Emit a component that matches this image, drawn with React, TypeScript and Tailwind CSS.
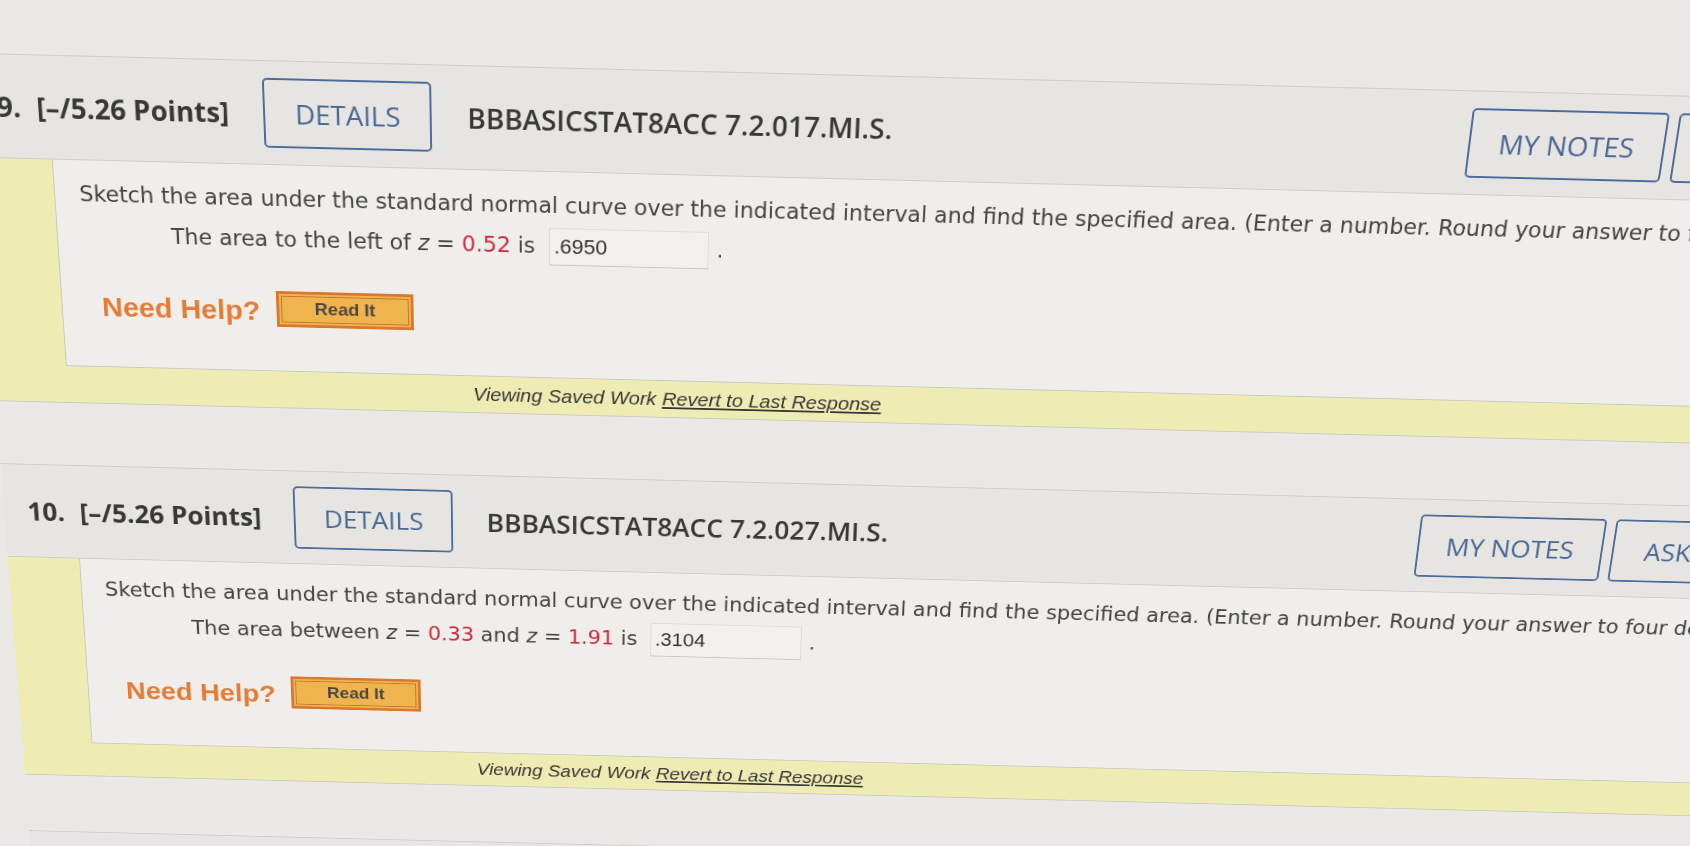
import React from 'react';

type Question = {
    num: string;
    code: string;
    prompt: React.ReactNode;
    answer: string;
};

const Red = ({ children }: { children: React.ReactNode }) => (
    <span className="text-[#cf2a3a]">{children}</span>
);

const questions: Question[] = [
    {
        num: '9.',
        code: 'BBBASICSTAT8ACC 7.2.017.MI.S.',
        prompt: (
            <>
                The area to the left of <i>z</i> = <Red>0.52</Red> is
            </>
        ),
        answer: '.6950',
    },
    {
        num: '10.',
        code: 'BBBASICSTAT8ACC 7.2.027.MI.S.',
        prompt: (
            <>
                The area between <i>z</i> = <Red>0.33</Red> and <i>z</i> = <Red>1.91</Red> is
            </>
        ),
        answer: '.3104',
    },
    {
        num: '11.',
        code: 'BBBASICSTAT8ACC 7.2.031.MI.S.',
        prompt: (
            <>
                The area to the right of <i>z</i> = <Red>1.24</Red> is
            </>
        ),
        answer: '',
    },
];

function QuestionBlock({ q }: { q: Question }) {
    return (
        <section className="mb-[70px]">
            {/* header */}
            <div className="flex h-[108px] items-center border-y border-[#cdccc7] bg-[#e6e5e1] pl-[25px] font-['Open_Sans',sans-serif] text-[#383838]">
                <div className="flex w-[1493px] shrink-0 items-center whitespace-nowrap">
                    <span className="text-[28px] font-bold">{q.num}</span>
                    <span className="ml-[16px] text-[28px] font-bold">[–/5.26 Points]</span>
                    <button className="ml-[35px] h-[72px] w-[171px] rounded-[5px] border-[2.5px] border-[#4d6c9b] text-[28px] text-[#4a6895]">
                        DETAILS
                    </button>
                    <span className="ml-[36px] text-[28.3px] font-semibold">{q.code}</span>
                </div>
                <div className="flex shrink-0 gap-[10px] whitespace-nowrap">
                    <button className="h-[72px] w-[199px] rounded-[5px] border-[2.5px] border-[#4d6c9b] text-[28px] text-[#4a6895]">
                        MY NOTES
                    </button>
                    <button className="h-[72px] rounded-[5px] border-[2.5px] border-[#4d6c9b] px-[33px] text-[28px] text-[#4a6895]">
                        ASK YOUR TEACHER
                    </button>
                    <button className="h-[72px] rounded-[5px] border-[2.5px] border-[#4d6c9b] px-[33px] text-[28px] text-[#4a6895]">
                        PRACTICE ANOTHER
                    </button>
                </div>
            </div>

            {/* body */}
            <div className="border-b border-[#c9c8c0] bg-[#eeebb3]">
                <div className="ml-[77px] h-[222px] border-b border-l border-[#cac9c4] bg-[#efeeeb] pl-[25px] pt-[22px] font-['DejaVu_Sans',sans-serif] text-[22.7px] leading-[1.2] text-[#444]">
                    <p className="whitespace-nowrap">
                        Sketch the area under the standard normal curve over the indicated interval and find the specified area. (Enter a number. Round your answer to four decimal places.)
                    </p>
                    <div className="ml-[92px] mt-[10px] whitespace-nowrap">
                        {q.prompt}{' '}
                        <span className="ml-[7px] inline-flex h-[40px] w-[165px] items-center border border-[#dddcd8] border-b-[#c6c5c1] bg-[#f1f0ee] pl-[4px] align-baseline font-['Liberation_Sans',sans-serif] text-[22px] text-[#333]">
                            {q.answer}
                        </span>
                        <span className="ml-[8px]">.</span>
                    </div>
                    <div className="ml-[16px] mt-[34px] flex items-center">
                        <span className="mt-[5px] font-['Liberation_Sans',sans-serif] text-[30px] font-bold text-[#e57c35]">Need Help?</span>
                        <button className="ml-[17px] h-[39px] w-[143px] border-[3px] border-[#dc782e] bg-[#f0b44e] p-[2px]">
                            <span className="flex h-full items-center justify-center border border-[#c07733] font-['Liberation_Sans',sans-serif] text-[19px] font-bold text-[#4d4843]">
                                Read It
                            </span>
                        </button>
                    </div>
                </div>
                <div className="flex h-[40px] items-center whitespace-nowrap pl-[505px] font-['Liberation_Sans',sans-serif] text-[21px] italic text-[#383838]">
                    Viewing Saved Work
                    <a href="#" className="ml-[6px] underline">Revert to Last Response</a>
                </div>
            </div>
        </section>
    );
}

export default function App() {
    return (
        <div className="h-[846px] w-[1690px] overflow-hidden bg-[#e9e8e4]">
            {/* the page as it is photographed: slight perspective and slant */}
            <div className="w-[2400px] origin-top-left pt-[54px] [transform:matrix3d(1,0.025,0,0,0.0737,1,0,0.000135,0,0,1,0,-36,-0.9,0,1)]">
                {questions.map(q => (
                    <QuestionBlock key={q.num} q={q} />
                ))}
            </div>
        </div>
    );
}
